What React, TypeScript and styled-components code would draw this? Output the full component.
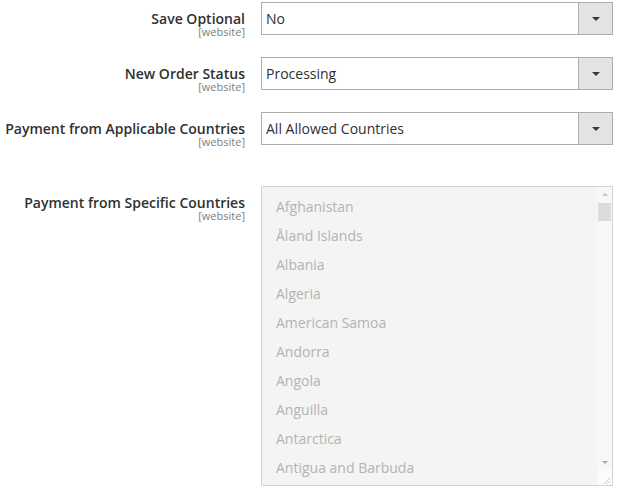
import React from "react";
import styled, { createGlobalStyle } from "styled-components";

const Global = createGlobalStyle`
  html, body { margin: 0; padding: 0; background: #ffffff; }
  body { font-family: "Open Sans", "Noto Sans", sans-serif; color: #303030; }
`;

const Form = styled.div`
  display: flex;
  flex-direction: column;
  gap: 22px;
  padding-top: 2px;
  width: 629px;
`;

const Row = styled.div<{ $extraTop?: number }>`
  display: grid;
  grid-template-columns: 245px 352px;
  column-gap: 16px;
  align-items: start;
  margin-top: ${(p) => p.$extraTop ?? 0}px;
`;

const LabelCol = styled.div`
  box-sizing: border-box;
  height: 33px;
  display: flex;
  flex-direction: column;
  align-items: flex-end;
  padding-top: 10px;
  text-align: right;
  white-space: nowrap;
`;

const LabelText = styled.span`
  flex-shrink: 0;
  font-size: 14px;
  font-weight: 600;
  line-height: 14px;
  color: #303030;
`;

const Scope = styled.span`
  flex-shrink: 0;
  font-size: 11px;
  line-height: 11px;
  color: #808080;
`;

const SelectBox = styled.div`
  box-sizing: border-box;
  height: 33px;
  border: 1px solid #adadad;
  background: #ffffff;
  display: flex;
  align-items: stretch;
`;

const SelectValue = styled.div`
  flex: 1;
  padding-left: 4px;
  font-size: 14px;
  line-height: 31px;
  color: #303030;
`;

const ArrowBox = styled.div`
  width: 33px;
  border-left: 1px solid #adadad;
  background: #e3e3e3;
  display: flex;
  align-items: center;
  justify-content: center;
`;

const Triangle = styled.div<{ $up?: boolean; $size?: number; $color?: string }>`
  width: 0;
  height: 0;
  border-left: ${(p) => p.$size ?? 4}px solid transparent;
  border-right: ${(p) => p.$size ?? 4}px solid transparent;
  ${(p) =>
    p.$up
      ? `border-bottom: ${Math.round((p.$size ?? 4) * 0.9)}px solid ${p.$color ?? "#41362f"};`
      : `border-top: ${Math.round((p.$size ?? 4) * 0.9)}px solid ${p.$color ?? "#41362f"};`}
`;

const MultiBox = styled.div`
  box-sizing: border-box;
  height: 300px;
  border: 1px solid #d3d3d3;
  background: #f4f4f4;
  display: flex;
  overflow: hidden;
`;

const OptionList = styled.div`
  flex: 1;
  padding: 5px 0 0 14px;
  overflow: hidden;
`;

const Option = styled.div`
  font-size: 14px;
  line-height: 29px;
  color: #b3b3b3;
  white-space: nowrap;
`;

const ScrollBar = styled.div`
  width: 15px;
  display: flex;
  flex-direction: column;
  align-items: center;
  background: #f7f7f7;
`;

const ScrollBtn = styled.div`
  height: 14px;
  width: 100%;
  display: flex;
  align-items: center;
  justify-content: center;
`;

const Thumb = styled.div`
  width: 13px;
  height: 18px;
  background: #dcdcdc;
  margin-top: 2px;
`;

const ScrollSpacer = styled.div`
  flex: 1;
`;

const Resizer = styled.div`
  width: 15px;
  height: 16px;
  background: #fbfbfb;
  display: flex;
  align-items: flex-end;
  justify-content: flex-end;
`;

const countries = [
  "Afghanistan",
  "Åland Islands",
  "Albania",
  "Algeria",
  "American Samoa",
  "Andorra",
  "Angola",
  "Anguilla",
  "Antarctica",
  "Antigua and Barbuda",
];

function Label({ text }: { text: string }) {
  return (
    <LabelCol>
      <LabelText>{text}</LabelText>
      <Scope>[website]</Scope>
    </LabelCol>
  );
}

function Select({ value }: { value: string }) {
  return (
    <SelectBox>
      <SelectValue>{value}</SelectValue>
      <ArrowBox>
        <Triangle $size={4} />
      </ArrowBox>
    </SelectBox>
  );
}

export default function App() {
  return (
    <>
      <Global />
      <Form>
        <Row>
          <Label text="Save Optional" />
          <Select value="No" />
        </Row>
        <Row>
          <Label text="New Order Status" />
          <Select value="Processing" />
        </Row>
        <Row>
          <Label text="Payment from Applicable Countries" />
          <Select value="All Allowed Countries" />
        </Row>
        <Row $extraTop={19}>
          <Label text="Payment from Specific Countries" />
          <MultiBox>
            <OptionList>
              {countries.map((c) => (
                <Option key={c}>{c}</Option>
              ))}
            </OptionList>
            <ScrollBar>
              <ScrollBtn>
                <Triangle $up $size={3} $color="#c4c4c4" />
              </ScrollBtn>
              <Thumb />
              <ScrollSpacer />
              <ScrollBtn>
                <Triangle $size={3} $color="#a8a8a8" />
              </ScrollBtn>
              <Resizer>
                <svg width="15" height="16" viewBox="0 0 15 16">
                  <path d="M13 9 L7 15 M13 12 L10 15" stroke="#c8c8c8" strokeWidth="1" />
                </svg>
              </Resizer>
            </ScrollBar>
          </MultiBox>
        </Row>
      </Form>
    </>
  );
}
